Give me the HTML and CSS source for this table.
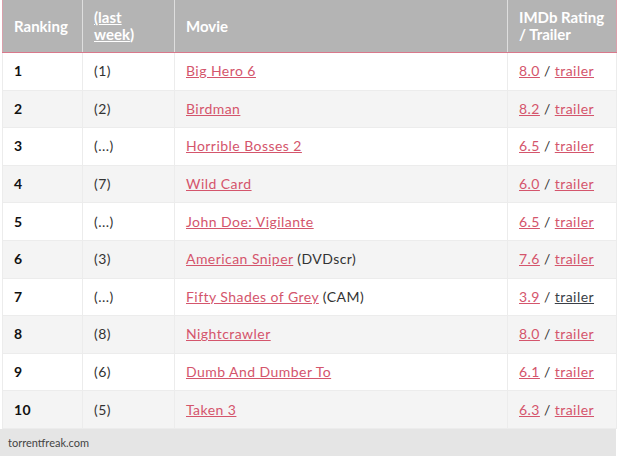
FILE: index.html
```html
<!DOCTYPE html>
<html>
<head>
<meta charset="utf-8">
<link rel="stylesheet" href="styles.css">
</head>
<body>
<div class="wrap">
<table class="chart">
  <thead>
    <tr>
      <th class="c1">Ranking</th>
      <th class="c2"><a href="#">(last<br>week</a>)</th>
      <th class="c3">Movie</th>
      <th class="c4">IMDb Rating<br>/ Trailer</th>
    </tr>
  </thead>
  <tbody>
    <tr><td class="rank">1</td><td>(1)</td><td><a href="#">Big Hero 6</a></td><td><a href="#">8.0</a> / <a href="#">trailer</a></td></tr>
    <tr><td class="rank">2</td><td>(2)</td><td><a href="#">Birdman</a></td><td><a href="#">8.2</a> / <a href="#">trailer</a></td></tr>
    <tr><td class="rank">3</td><td>(...)</td><td><a href="#">Horrible Bosses 2</a></td><td><a href="#">6.5</a> / <a href="#">trailer</a></td></tr>
    <tr><td class="rank">4</td><td>(7)</td><td><a href="#">Wild Card</a></td><td><a href="#">6.0</a> / <a href="#">trailer</a></td></tr>
    <tr><td class="rank">5</td><td>(...)</td><td><a href="#">John Doe: Vigilante</a></td><td><a href="#">6.5</a> / <a href="#">trailer</a></td></tr>
    <tr><td class="rank">6</td><td>(3)</td><td><a href="#">American Sniper</a> (DVDscr)</td><td><a href="#">7.6</a> / <a href="#">trailer</a></td></tr>
    <tr><td class="rank">7</td><td>(...)</td><td><a href="#">Fifty Shades of Grey</a> (CAM)</td><td><a href="#">3.9</a> / <a href="#" class="visited">trailer</a></td></tr>
    <tr><td class="rank">8</td><td>(8)</td><td><a href="#">Nightcrawler</a></td><td><a href="#">8.0</a> / <a href="#">trailer</a></td></tr>
    <tr><td class="rank">9</td><td>(6)</td><td><a href="#">Dumb And Dumber To</a></td><td><a href="#">6.1</a> / <a href="#">trailer</a></td></tr>
    <tr><td class="rank">10</td><td>(5)</td><td><a href="#">Taken 3</a></td><td><a href="#">6.3</a> / <a href="#">trailer</a></td></tr>
  </tbody>
</table>
<div class="source">torrentfreak.com</div>
</div>
</body>
</html>
```
FILE: styles.css
```css
html, body {
  margin: 0;
  padding: 0;
  background: #ffffff;
}
body {
  font-family: Lato, "Open Sans", sans-serif;
  color: #333333;
}
.wrap {
  width: 616px;
  padding-left: 2px;
}
.chart {
  width: 615px;
  border-collapse: collapse;
  table-layout: fixed;
  font-size: 14px;
  letter-spacing: 0.45px;
}
.chart th {
  background: #b4b4b4;
  color: #ffffff;
  font-weight: 700;
  font-size: 15px;
  letter-spacing: 0;
  line-height: 17px;
  text-align: left;
  padding: 0 11px;
  height: 52px;
  border-left: 1px solid #dedede;
  border-bottom: 1px solid #d9788b;
}
.chart th.c1 { width: 57px; border-left: 1px solid #d9a0ab; }
.chart th.c2 { width: 69px; }
.chart th.c3 { width: 310px; }
.chart th.c4 { border-right: 1px solid #d9a0ab; }
.chart th a {
  color: #ffffff;
  text-decoration: underline;
}
.chart td {
  height: 36.6px;
  padding: 0 11px;
  border: 1px solid #ececec;
  border-top: none;
  line-height: 18px;
  vertical-align: middle;
}
.chart tbody tr:nth-child(even) td {
  background: #f4f4f4;
}
.chart td.rank {
  font-weight: 700;
  color: #111111;
}
.chart td a {
  color: #d4556c;
  text-decoration: underline;
}
.chart td a.visited {
  color: #3a3f47;
}
.source {
  width: 608px;
  background: #e5e5e5;
  height: 27px;
  line-height: 27px;
  padding-left: 8px;
  margin-left: -2px;
  font-size: 11px;
  color: #444444;
}
```
